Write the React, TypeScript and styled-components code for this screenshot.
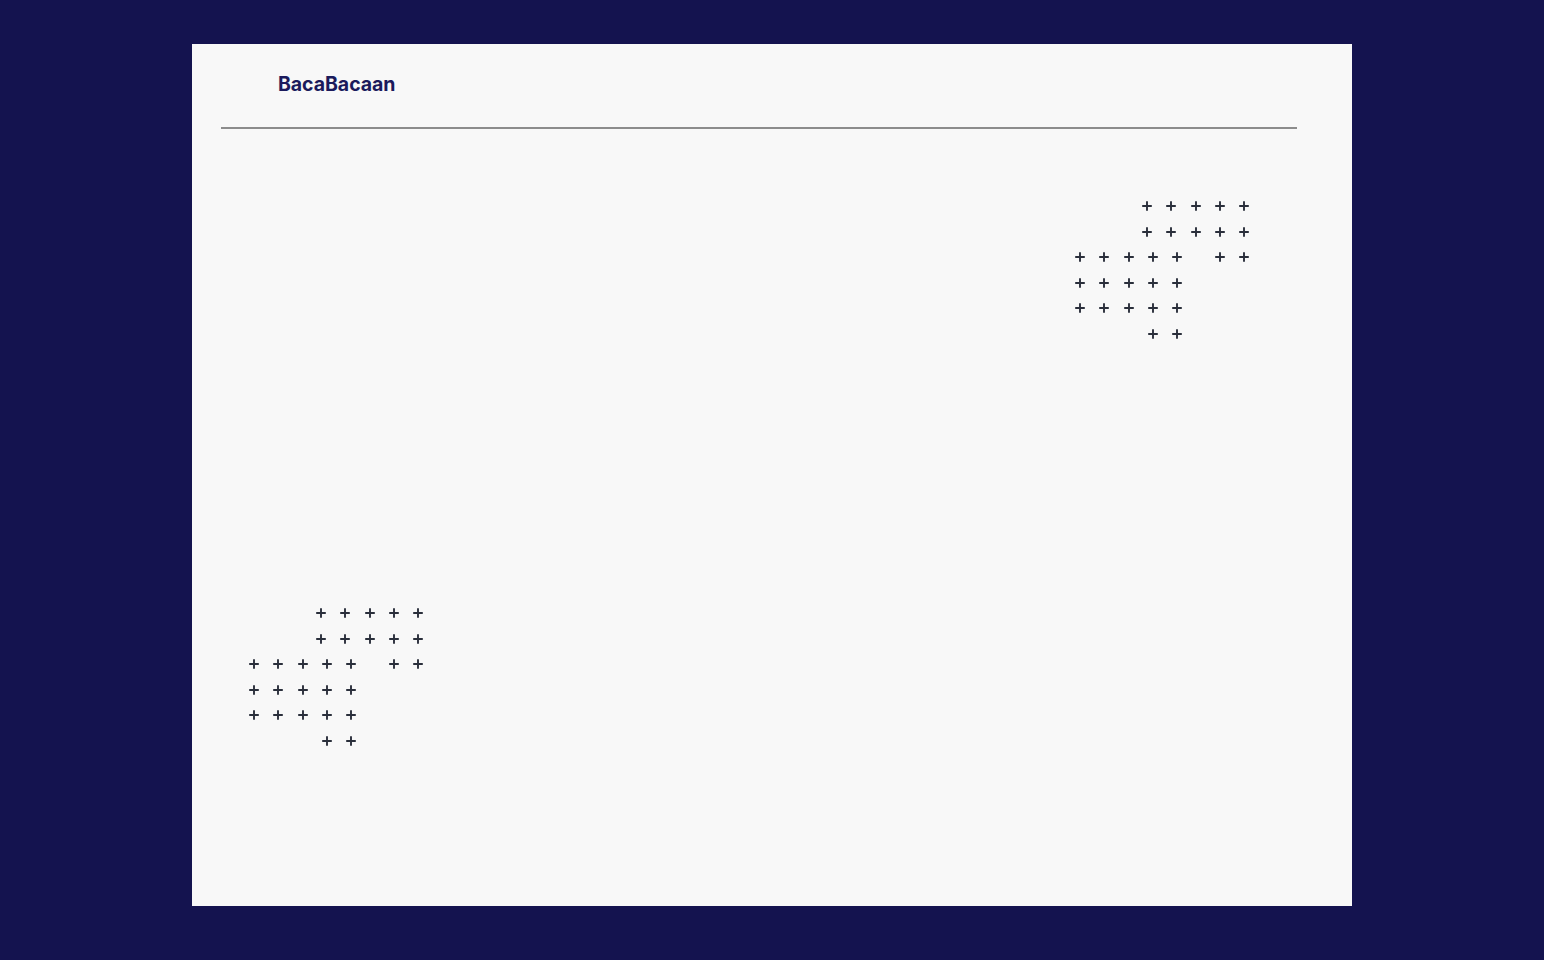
import React from "react";
import styled, { createGlobalStyle } from "styled-components";

const Global = createGlobalStyle`
  html, body { margin: 0; padding: 0; }
  body {
    background: #14134f;
    font-family: Inter, "Open Sans", Arial, sans-serif;
  }
`;

const Page = styled.div`
  width: 1544px;
  height: 960px;
  box-sizing: border-box;
  padding: 44px 192px 54px;
  display: flex;
`;

const Card = styled.main`
  flex: 1;
  background: #f8f8f8;
  display: flex;
  flex-direction: column;
`;

const Header = styled.header`
  height: 83px;
  box-sizing: border-box;
  padding: 28px 0 0 86px;
`;

const Logo = styled.div`
  font-family: Inter, "Open Sans", sans-serif;
  font-weight: 700;
  font-size: 19.5px;
  line-height: 24px;
  color: #1b1a5c;
  letter-spacing: -0.05px;
`;

const Divider = styled.hr`
  margin: 0 55px 0 29px;
  border: none;
  height: 2px;
  background: #8c8c8c;
`;

const Body = styled.section`
  flex: 1;
  display: flex;
  flex-direction: column;
`;

const Cluster = styled.div<{ $left: number; $top: number }>`
  display: grid;
  grid-template-areas: "stack";
  align-self: flex-start;
  margin-left: ${(p) => p.$left}px;
  margin-top: ${(p) => p.$top}px;
`;

const PlusGrid = styled.div<{ $dx: number; $dy: number }>`
  grid-area: stack;
  display: grid;
  grid-template-columns: repeat(5, 24.25px);
  grid-auto-rows: 25.5px;
  align-items: center;
  justify-items: center;
  align-self: start;
  justify-self: start;
  margin-left: ${(p) => p.$dx}px;
  margin-top: ${(p) => p.$dy}px;
`;

const PlusCell = styled.span<{ $col?: number }>`
  display: flex;
  width: 10px;
  height: 10px;
  ${(p) => (p.$col ? `grid-column: ${p.$col};` : "")}
`;

const Plus = ({ col }: { col?: number }) => (
  <PlusCell $col={col}>
    <svg width="10" height="10" viewBox="0 0 10 10">
      <path d="M5 0.2V9.8M0.2 5H9.8" stroke="#2a2f3b" strokeWidth="1.9" />
    </svg>
  </PlusCell>
);

const Rows = ({ full }: { full: number }) => (
  <>
    {Array.from({ length: full * 5 }).map((_, i) => (
      <Plus key={i} />
    ))}
    <Plus col={4} />
    <Plus col={5} />
  </>
);

const PlusCluster = ({ left, top }: { left: number; top: number }) => (
  <Cluster $left={left} $top={top}>
    <PlusGrid $dx={67} $dy={0}>
      <Rows full={2} />
    </PlusGrid>
    <PlusGrid $dx={0} $dy={51}>
      <Rows full={3} />
    </PlusGrid>
  </Cluster>
);

export default function App() {
  return (
    <Page>
      <Global />
      <Card>
        <Header>
          <Logo>BacaBacaan</Logo>
        </Header>
        <Divider />
        <Body>
          <PlusCluster left={875.9} top={64.25} />
          <PlusCluster left={49.9} top={254} />
        </Body>
      </Card>
    </Page>
  );
}
